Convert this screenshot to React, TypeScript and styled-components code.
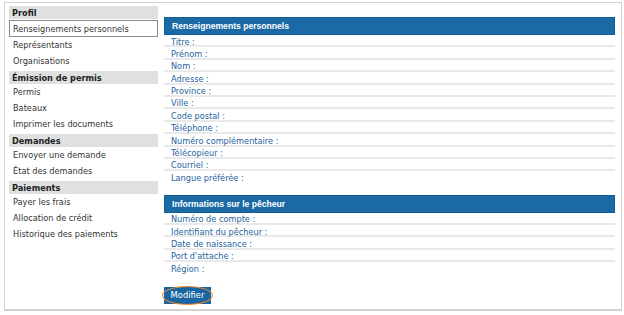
import React from 'react';
import styled, { createGlobalStyle } from 'styled-components';

const GlobalStyle = createGlobalStyle`
  html, body {
    margin: 0;
    padding: 0;
    background: #ffffff;
  }
  body {
    font-family: 'DejaVu Sans', Verdana, sans-serif;
  }
`;

const Frame = styled.div`
  box-sizing: border-box;
  margin: 2px 0 0 4px;
  width: 618px;
  height: 309px;
  border: 1px solid #d2d2d2;
  border-bottom-width: 2px;
  padding: 3px 6px 0 4px;
  display: flex;
  gap: 6px;
  background: #fff;
`;

const Sidebar = styled.nav`
  width: 149px;
  flex-shrink: 0;
  display: flex;
  flex-direction: column;
`;

const SectionTitle = styled.div<{ $first?: boolean }>`
  height: 13px;
  line-height: 14px;
  margin-top: ${(p) => (p.$first ? 0 : 2)}px;
  padding-left: 3px;
  background: #e0e0e0;
  color: #222;
  font-size: 8.2px;
  font-weight: bold;
`;

const NavItem = styled.div<{ $active?: boolean }>`
  box-sizing: border-box;
  height: ${(p) => (p.$active ? 17 : 16)}px;
  line-height: ${(p) => (p.$active ? 16 : 17)}px;
  margin-top: ${(p) => (p.$active ? 1 : 0)}px;
  padding-left: ${(p) => (p.$active ? 3 : 4)}px;
  border: ${(p) => (p.$active ? '1px solid #8c8c8c' : 'none')};
  color: #333;
  font-size: 8.2px;
  white-space: nowrap;
`;

const Main = styled.main`
  flex: 1;
  padding-top: 11px;
  display: flex;
  flex-direction: column;
`;

const Panel = styled.section<{ $gap?: number }>`
  margin-bottom: ${(p) => p.$gap ?? 0}px;
`;

const PanelHeader = styled.div`
  box-sizing: border-box;
  height: 18px;
  line-height: 16px;
  padding-left: 7px;
  background: #1b6aa6;
  border: 1px solid #135c94;
  color: #fff;
  font-family: 'Liberation Sans', Arial, sans-serif;
  font-size: 8.6px;
  font-weight: bold;
`;

const Row = styled.div`
  box-sizing: border-box;
  height: 12.4px;
  line-height: 11px;
  padding: 1.5px 0 0 7px;
  border-bottom: 2px solid #e9e9e9;
  color: #2763a0;
  font-size: 8.2px;
  white-space: nowrap;

  &:last-child {
    border-bottom: none;
  }
`;

const ButtonWrap = styled.div`
  position: relative;
  align-self: flex-start;
  margin-top: 12px;
`;

const Button = styled.button`
  display: block;
  width: 47px;
  height: 17px;
  padding: 0;
  border: none;
  background: #1a66a3;
  color: #fff;
  font-family: 'DejaVu Sans', Verdana, sans-serif;
  font-size: 8.4px;
  cursor: pointer;
`;

const Highlight = styled.span`
  position: absolute;
  left: -2px;
  top: -1px;
  right: -2px;
  bottom: -1px;
  border: 1.5px solid #ee8a2a;
  border-radius: 50%;
  pointer-events: none;
`;

const nav = [
  {
    title: 'Profil',
    items: ['Renseignements personnels', 'Représentants', 'Organisations'],
  },
  {
    title: 'Émission de permis',
    items: ['Permis', 'Bateaux', 'Imprimer les documents'],
  },
  { title: 'Demandes', items: ['Envoyer une demande', 'État des demandes'] },
  {
    title: 'Paiements',
    items: ['Payer les frais', 'Allocation de crédit', 'Historique des paiements'],
  },
];

const personal = [
  'Titre :',
  'Prénom :',
  'Nom :',
  'Adresse :',
  'Province :',
  'Ville :',
  'Code postal :',
  'Téléphone :',
  'Numéro complémentaire :',
  'Télécopieur :',
  'Courriel :',
  'Langue préférée :',
];

const fisher = [
  'Numéro de compte :',
  'Identifiant du pêcheur :',
  'Date de naissance :',
  "Port d'attache :",
  'Région :',
];

const App: React.FC = () => (
  <>
    <GlobalStyle />
    <Frame>
      <Sidebar>
        {nav.map((section, i) => (
          <React.Fragment key={section.title}>
            <SectionTitle $first={i === 0}>{section.title}</SectionTitle>
            {section.items.map((item) => (
              <NavItem key={item} $active={item === 'Renseignements personnels'}>
                {item}
              </NavItem>
            ))}
          </React.Fragment>
        ))}
      </Sidebar>
      <Main>
        <Panel $gap={11}>
          <PanelHeader>Renseignements personnels</PanelHeader>
          {personal.map((label) => (
            <Row key={label}>{label}</Row>
          ))}
        </Panel>
        <Panel>
          <PanelHeader>Informations sur le pêcheur</PanelHeader>
          {fisher.map((label) => (
            <Row key={label}>{label}</Row>
          ))}
        </Panel>
        <ButtonWrap>
          <Button type="button">Modifier</Button>
          <Highlight />
        </ButtonWrap>
      </Main>
    </Frame>
  </>
);

export default App;
